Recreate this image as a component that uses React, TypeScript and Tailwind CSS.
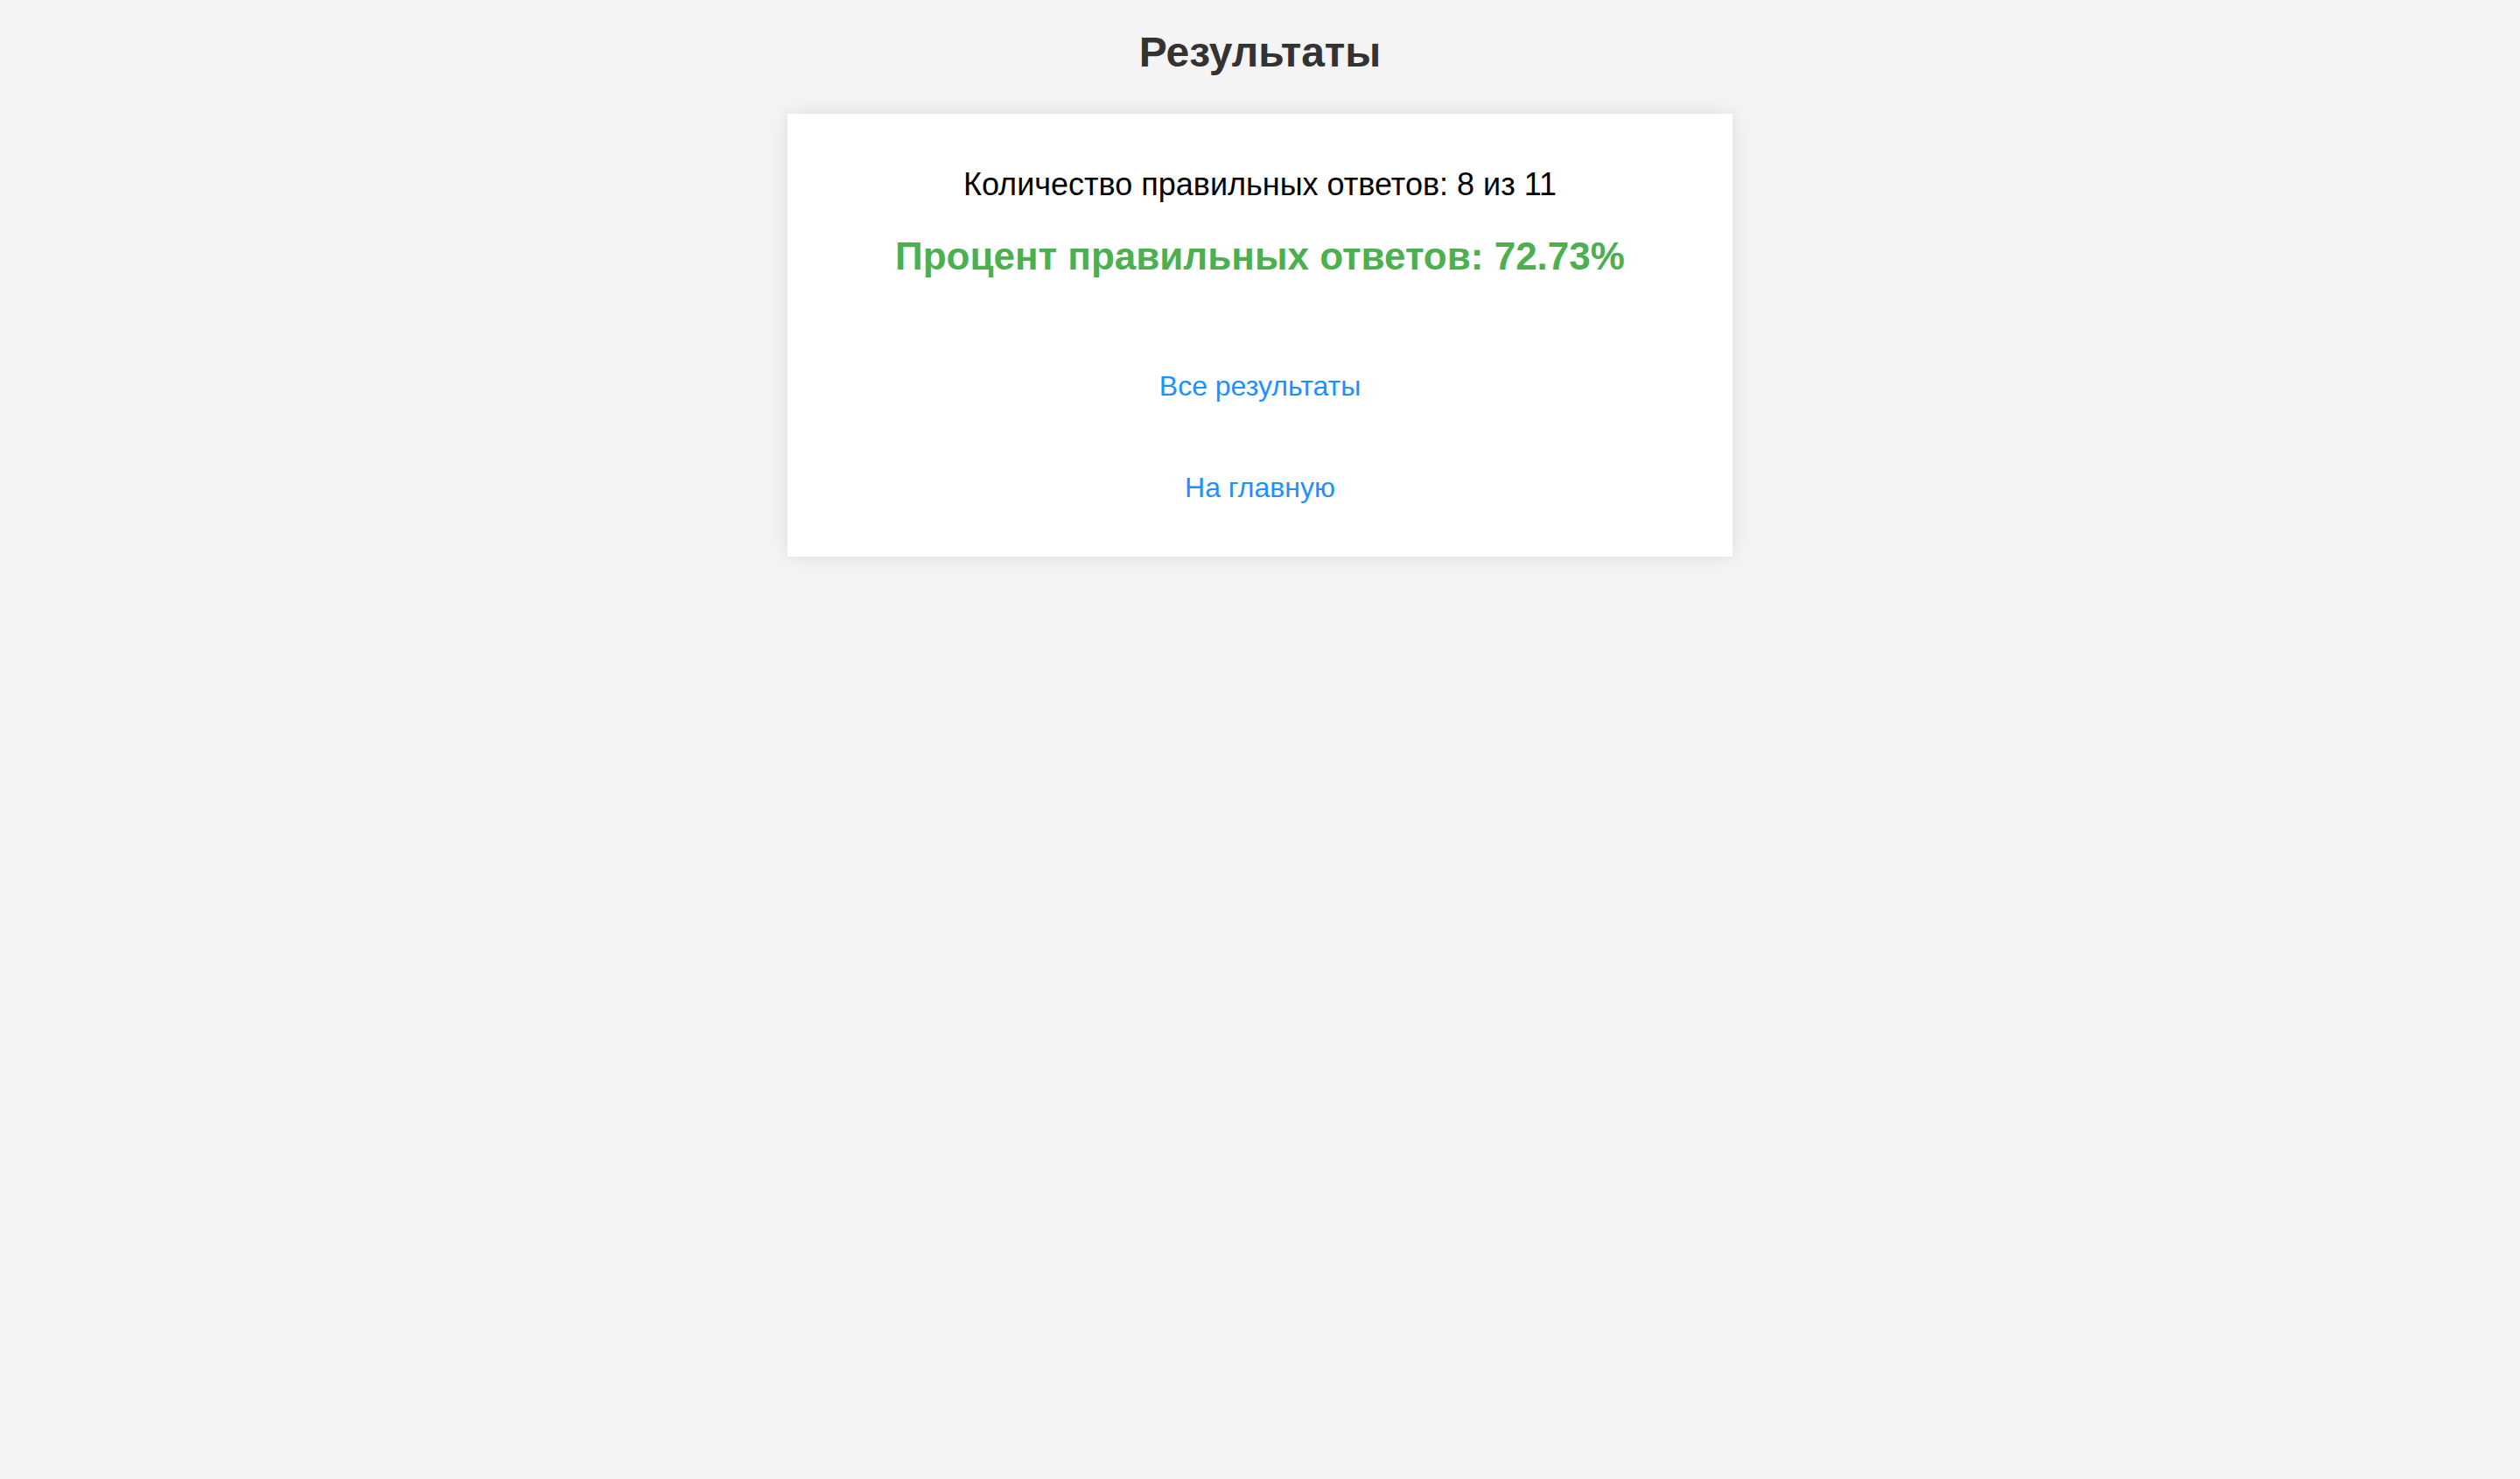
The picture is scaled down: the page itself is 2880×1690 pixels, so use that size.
import React from 'react'

const App = () => {
  return (
    <div className="min-h-[1690px] w-full bg-[#f4f4f4] flex flex-col items-center pt-[32px] font-['Liberation_Sans',Arial,sans-serif]">
      <h1 className="text-[48px] leading-[56px] font-bold text-[#333333]">Результаты</h1>
      <div className="mt-[42px] w-[1080px] bg-white shadow-[0_0_20px_rgba(0,0,0,0.1)] flex flex-col items-center pt-[59px] pb-[59px]">
        <p className="text-[36px] leading-[44px] text-black">Количество правильных ответов: 8 из 11</p>
        <p className="mt-[34px] text-[44px] leading-[52px] font-bold text-[#4caf50]">Процент правильных ответов: 72.73%</p>
        <a href="#" className="mt-[102px] text-[32px] leading-[40px] text-[#1e90ff]">Все результаты</a>
        <a href="#" className="mt-[76px] text-[32px] leading-[40px] text-[#1e90ff]">На главную</a>
      </div>
    </div>
  )
}

export default App
